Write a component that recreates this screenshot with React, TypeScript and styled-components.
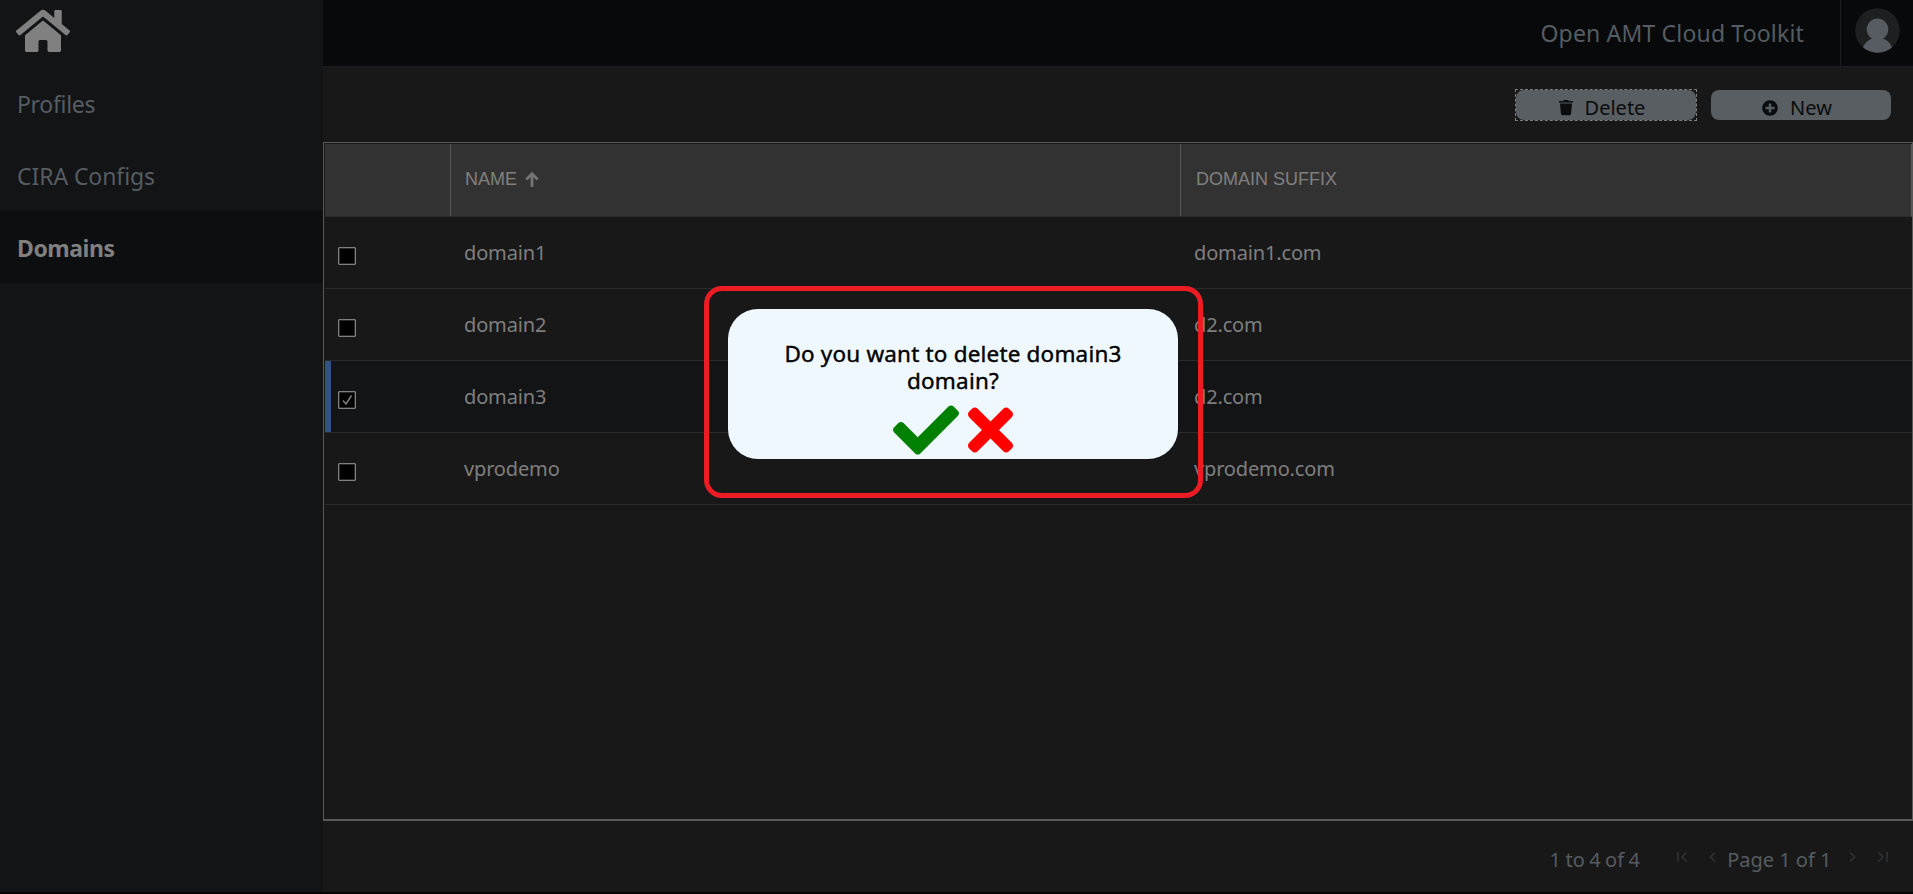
import React from 'react';
import styled, { createGlobalStyle } from 'styled-components';
import { FaHome, FaCheck, FaTimes, FaPlusCircle } from 'react-icons/fa';

const GlobalStyle = createGlobalStyle`
  * { box-sizing: border-box; }
  body {
    margin: 0;
    background: #050304;
    font-family: 'Noto Sans', 'Open Sans', sans-serif;
    overflow: hidden;
  }
`;

const Page = styled.div`
  display: flex;
  height: 894px;
  padding-bottom: 2px;
`;

const Sidebar = styled.nav`
  width: 323px;
  flex: none;
  background: #121416;
`;

const HomeLink = styled.div`
  height: 67px;
  padding: 7px 0 0 16px;
  color: #808080;
  svg { display: block; width: 54px; height: 48px; }
`;

const NavItem = styled.div<{ $active?: boolean; $spacing?: number }>`
  height: 72px;
  padding-left: 17px;
  line-height: 75px;
  font-size: 23px;
  letter-spacing: ${(p) => p.$spacing ?? 0}px;
  font-weight: ${(p) => (p.$active ? 700 : 400)};
  color: ${(p) => (p.$active ? '#808080' : '#565c61')};
  background: ${(p) => (p.$active ? '#0d0e10' : 'transparent')};
`;

const Main = styled.main`
  flex: 1;
  min-width: 0;
  display: flex;
  flex-direction: column;
  background: #181818;
`;

const TopBar = styled.header`
  height: 67px;
  display: flex;
  justify-content: flex-end;
  background: #07090b;
  border-bottom: 1px solid #1c1e20;
`;

const AppTitle = styled.div`
  padding-right: 36px;
  line-height: 66px;
  font-size: 23px;
  letter-spacing: 0.17px;
  color: #565c61;
`;

const AvatarBox = styled.div`
  width: 73px;
  border-left: 1px solid #1c1e20;
  padding: 8px 0 0 14px;
  svg { display: block; }
`;

const Toolbar = styled.div`
  height: 75px;
  padding: 23px 22px 0 0;
  display: flex;
  justify-content: flex-end;
  gap: 15px;
`;

const Button = styled.button<{ $focused?: boolean }>`
  position: relative;
  width: 180px;
  height: 30px;
  padding: 5px 8px 0 0;
  border: 0;
  border-radius: 8px;
  display: flex;
  align-items: center;
  justify-content: center;
  gap: 12px;
  font: 400 20px/25px 'Noto Sans', sans-serif;
  color: #0a0c0e;
  background: #585e62;
  svg { display: block; flex: none; }

  &::after {
    content: '';
    display: ${(p) => (p.$focused ? 'block' : 'none')};
    position: absolute;
    inset: -1px;
    border: 1px dashed #7d7d7d;
  }
`;

const Grid = styled.section`
  height: 679px;
  border: 1px solid #585858;
  border-bottom-width: 2px;
  padding: 1px 0 0 1px;
`;

const GridHeader = styled.div`
  display: flex;
  height: 73px;
  background: #323232;
  border-bottom: 1px solid #2b2b2b;
  border-right: 1px solid #585858;
`;

const HeaderCell = styled.div<{ $width?: number }>`
  width: ${(p) => (p.$width ? `${p.$width}px` : 'auto')};
  flex: ${(p) => (p.$width ? 'none' : 1)};
  border-right: ${(p) => (p.$width ? '1px solid #585858' : 'none')};
  padding: 0 0 2px ${(p) => (p.$width ? 14 : 15)}px;
  display: flex;
  align-items: center;
  gap: 8px;
  font: 400 18px 'Liberation Sans', Arial, sans-serif;
  color: #808080;
`;

const Row = styled.div<{ $selected?: boolean }>`
  height: 72px;
  display: flex;
  border-bottom: 1px solid #2b2b2b;
  background: ${(p) => (p.$selected ? '#121416' : '#181818')};
  box-shadow: ${(p) => (p.$selected ? 'inset 6px 0 0 #315384' : 'none')};
`;

const CheckCell = styled.div`
  width: 126px;
  padding: 30px 0 0 13px;
`;

const CheckBox = styled.div`
  width: 18px;
  height: 18px;
  border: 1px solid #808080;
  border-radius: 1px;
  background: #000;
  box-shadow: inset 0 0 0 0.5px #555;
  svg { display: block; }
`;

const Cell = styled.div<{ $width?: number }>`
  width: ${(p) => (p.$width ? `${p.$width}px` : 'auto')};
  padding-left: 13px;
  line-height: 72px;
  font-size: 20px;
  letter-spacing: -0.15px;
  color: #7f7f7f;
`;

const Pagination = styled.footer`
  height: 71px;
  display: flex;
  align-items: center;
  justify-content: flex-end;
  padding: 5px 24px 0 0;
  font-size: 20px;
  color: #565c61;
`;

const Summary = styled.span`
  margin-right: 36px;
  word-spacing: -1px;
  letter-spacing: 0.1px;
`;

const PageLabel = styled.span`
  margin: 0 14.5px 0 8px;
`;

const PagerIcon = styled.svg<{ $gap?: number }>`
  width: 12px;
  height: 12px;
  margin: 0 ${(p) => p.$gap ?? 0}px 5px 0;
  fill: none;
  stroke: #303234;
  stroke-width: 1.7;
`;

const Callout = styled.div`
  position: absolute;
  left: 704px;
  top: 286px;
  width: 499px;
  height: 212px;
  border: 5px solid #ed1c24;
  border-radius: 18px;
  padding: 18px 0 0 19px;
`;

const Dialog = styled.div`
  width: 450px;
  height: 150px;
  border-radius: 30px;
  background: #f0f8ff;
  padding: 31px 50px 0;
  text-align: center;
`;

const Question = styled.p`
  margin: 0;
  font-size: 22.5px;
  line-height: 27px;
  letter-spacing: 0.18px;
  color: #000;
  -webkit-text-stroke: 0.4px #000;
`;

const Actions = styled.div`
  display: flex;
  justify-content: center;
  gap: 9px;
  margin-top: 3px;
  svg { display: block; height: 66px; }
`;

const Accept = styled(FaCheck)`
  width: 66px;
  color: #008000;
`;

const Reject = styled(FaTimes)`
  width: 45px;
  color: #ff0000;
`;

const rows = [
  { name: 'domain1', suffix: 'domain1.com' },
  { name: 'domain2', suffix: 'd2.com' },
  { name: 'domain3', suffix: 'd2.com', selected: true },
  { name: 'vprodemo', suffix: 'vprodemo.com' },
];

const Avatar = () => (
  <svg width="46" height="46" viewBox="0 0 46 46">
    <defs>
      <clipPath id="avatar-clip">
        <circle cx="22.5" cy="22.5" r="22.3" />
      </clipPath>
    </defs>
    <circle cx="22.5" cy="22.5" r="22.3" fill="#1d1f21" />
    <g clipPath="url(#avatar-clip)" fill="#565c61">
      <circle cx="22.5" cy="21.3" r="10.8" />
      <path d="M7.5 42C8.500 35 14 31 18.500 30.500H26.500C31 31 36.500 35 37.500 42V46H7.500Z" />
    </g>
  </svg>
);

const Trash = () => (
  <svg width="14" height="16" viewBox="0 0 14 16" fill="#0a0c0e">
    <path d="M0 1H4L5 0H9L10 1H14V2.500H0Z" />
    <path d="M1 3.500H13L12 14Q11.800 15.300 10.500 15.300H3.500Q2.200 15.300 2 14Z" />
  </svg>
);

const SortArrow = () => (
  <svg width="14" height="16" viewBox="0 0 14 16" fill="none" stroke="#747474" strokeWidth="2.800">
    <path d="M7 16V3M1.300 8.500L7 2.800L12.700 8.500" />
  </svg>
);

export default function App() {
  return (
    <>
      <GlobalStyle />
      <Page>
        <Sidebar>
          <HomeLink><FaHome /></HomeLink>
          <NavItem $spacing={-0.3}>Profiles</NavItem>
          <NavItem $spacing={-0.08}>CIRA Configs</NavItem>
          <NavItem $active $spacing={-0.45}>Domains</NavItem>
        </Sidebar>
        <Main>
          <TopBar>
            <AppTitle>Open AMT Cloud Toolkit</AppTitle>
            <AvatarBox><Avatar /></AvatarBox>
          </TopBar>
          <Toolbar>
            <Button $focused><Trash />Delete</Button>
            <Button><FaPlusCircle size={16} />New</Button>
          </Toolbar>
          <Grid>
            <GridHeader>
              <HeaderCell $width={126} />
              <HeaderCell $width={730}>NAME <SortArrow /></HeaderCell>
              <HeaderCell>DOMAIN SUFFIX</HeaderCell>
            </GridHeader>
            {rows.map((row) => (
              <Row key={row.name} $selected={row.selected}>
                <CheckCell>
                  <CheckBox>
                    {row.selected && (
                      <svg width="16" height="16" viewBox="0 0 16 16" fill="none" stroke="#7f7f7f" strokeWidth="1.500">
                        <path d="M4 8.500L7 12L12.500 3.500" />
                      </svg>
                    )}
                  </CheckBox>
                </CheckCell>
                <Cell $width={730}>{row.name}</Cell>
                <Cell>{row.suffix}</Cell>
              </Row>
            ))}
          </Grid>
          <Pagination>
            <Summary>1 to 4 of 4</Summary>
            <PagerIcon $gap={19} viewBox="0 0 12 12"><path d="M2 1V11M10.500 1.500L6 6L10.500 10.500" /></PagerIcon>
            <PagerIcon viewBox="0 0 12 12"><path d="M8 1.500L3.500 6L8 10.500" /></PagerIcon>
            <PageLabel>Page 1 of 1</PageLabel>
            <PagerIcon $gap={19} viewBox="0 0 12 12"><path d="M4 1.500L8.500 6L4 10.500" /></PagerIcon>
            <PagerIcon viewBox="0 0 12 12"><path d="M10 1V11M1.500 1.500L6 6L1.500 10.500" /></PagerIcon>
          </Pagination>
        </Main>
      </Page>
      <Callout>
        <Dialog>
          <Question>Do you want to delete domain3 domain?</Question>
          <Actions>
            <Accept />
            <Reject />
          </Actions>
        </Dialog>
      </Callout>
    </>
  );
}
